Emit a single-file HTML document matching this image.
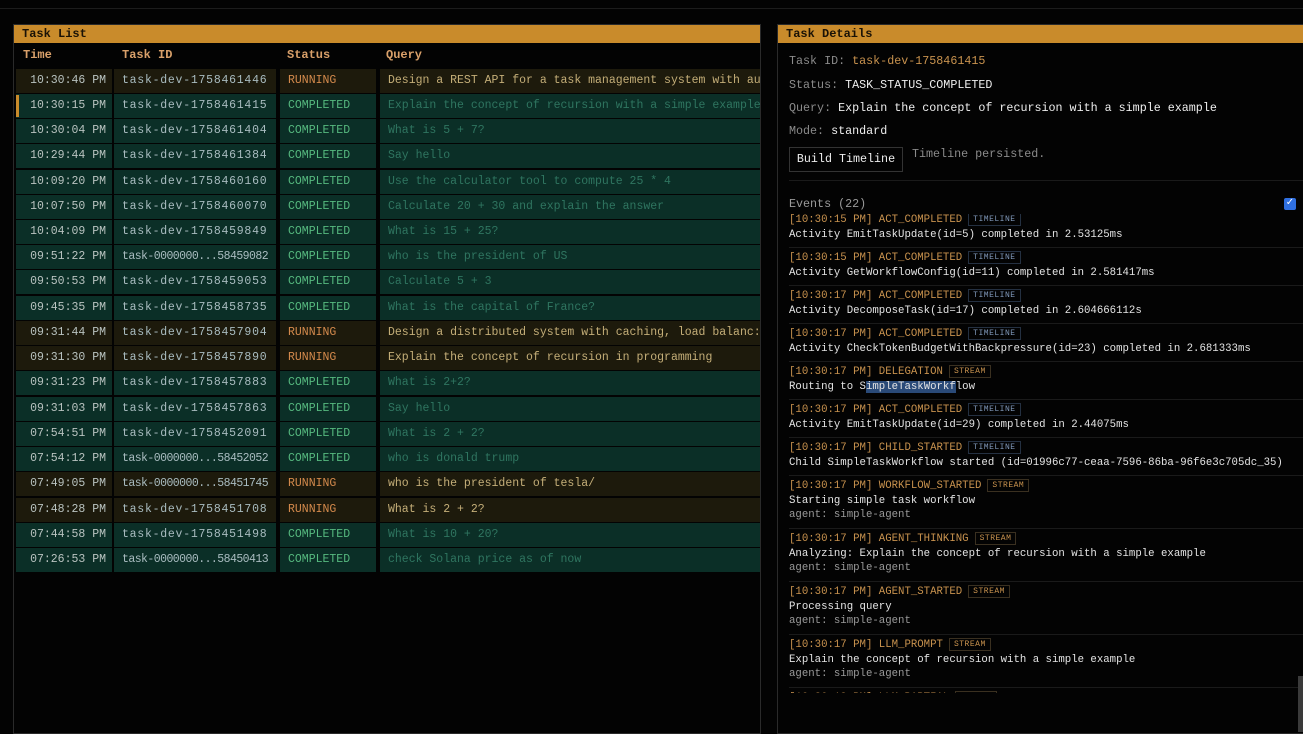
<!DOCTYPE html>
<html><head><meta charset="utf-8"><style>
*{margin:0;padding:0;box-sizing:border-box}
body{width:1303px;height:732px;background:#030303;overflow:hidden;position:relative;font-family:"Liberation Mono",monospace;}
.topline{position:absolute;left:0;top:8px;width:1303px;height:1px;background:#1c1c1c}
.panel{position:absolute;top:24px;bottom:-2px;border:1px solid #2a2a2a;background:#030303}
.hdr{height:18px;background:#c98b2b;color:#1a1206;font-weight:bold;font-size:12px;line-height:18px;padding-left:8px}
.th{position:absolute;top:48px;font-size:12px;color:#d9a06a;font-weight:bold}
.row{position:absolute;left:3px;width:744px;height:24px}
.c{position:absolute;top:0;height:24px;line-height:24px;font-size:11.5px;white-space:nowrap;overflow:hidden}
.r .c{background:#1d1a0c}
.g .c{background:#0b2f27}
.c1{left:0;width:96px;text-align:right;padding-right:6px;color:#b9c3c0}
.c2{left:98px;width:162px;padding-left:8px;color:#a9bcc0;letter-spacing:0.75px}
.c2.l{letter-spacing:-0.55px}
.c3{left:264px;width:96px;padding-left:8px}
.c4{left:364px;width:380px;padding-left:8px}
.r .c3{color:#d48a4c}.g .c3{color:#56b97f}
.r .c4{color:#c4ae78}.g .c4{color:#2f7560}
.sel{position:absolute;left:16px;top:95px;width:3px;height:22px;background:#c98b2b}
.d{position:absolute;left:789px;font-size:11.7px;white-space:nowrap}
.lab{color:#8b8b8b}
.ev{position:absolute;left:789px;font-size:10.7px;line-height:14.5px;white-space:nowrap;color:#e4e4e4}
.ev .h{color:#c8924e}
.tag{display:inline-block;font-size:8px;letter-spacing:0.5px;border:1px solid #3a3020;padding:0 4px;line-height:11px;margin-left:6px;vertical-align:1px}
.tag.t{color:#7f97b8;border-color:#243041}
.tag.s{color:#c8924e}
.ev .a{color:#9a9a9a}
.sep{position:absolute;left:789px;width:514px;height:1px;background:#1a1a1a}
</style></head><body>
<div class="topline"></div>
<div class="panel" style="left:13px;width:748px"><div class="hdr">Task List</div></div>
<div class="th" style="left:23px">Time</div>
<div class="th" style="left:122px">Task ID</div>
<div class="th" style="left:287px">Status</div>
<div class="th" style="left:386px">Query</div>
<div style="position:absolute;left:13px;top:69px;width:748px;height:505px;overflow:hidden">
<div class="row r" style="top:0"><div class="c c1">10:30:46 PM</div><div class="c c2">task-dev-1758461446</div><div class="c c3">RUNNING</div><div class="c c4">Design a REST API for a task management system with au</div></div>
<div class="row g" style="top:25px"><div class="c c1">10:30:15 PM</div><div class="c c2">task-dev-1758461415</div><div class="c c3">COMPLETED</div><div class="c c4">Explain the concept of recursion with a simple example</div></div>
<div class="row g" style="top:50px"><div class="c c1">10:30:04 PM</div><div class="c c2">task-dev-1758461404</div><div class="c c3">COMPLETED</div><div class="c c4">What is 5 + 7?</div></div>
<div class="row g" style="top:75px"><div class="c c1">10:29:44 PM</div><div class="c c2">task-dev-1758461384</div><div class="c c3">COMPLETED</div><div class="c c4">Say hello</div></div>
<div class="row g" style="top:101px"><div class="c c1">10:09:20 PM</div><div class="c c2">task-dev-1758460160</div><div class="c c3">COMPLETED</div><div class="c c4">Use the calculator tool to compute 25 * 4</div></div>
<div class="row g" style="top:126px"><div class="c c1">10:07:50 PM</div><div class="c c2">task-dev-1758460070</div><div class="c c3">COMPLETED</div><div class="c c4">Calculate 20 + 30 and explain the answer</div></div>
<div class="row g" style="top:151px"><div class="c c1">10:04:09 PM</div><div class="c c2">task-dev-1758459849</div><div class="c c3">COMPLETED</div><div class="c c4">What is 15 + 25?</div></div>
<div class="row g" style="top:176px"><div class="c c1">09:51:22 PM</div><div class="c c2 l">task-0000000...58459082</div><div class="c c3">COMPLETED</div><div class="c c4">who is the president of US</div></div>
<div class="row g" style="top:201px"><div class="c c1">09:50:53 PM</div><div class="c c2">task-dev-1758459053</div><div class="c c3">COMPLETED</div><div class="c c4">Calculate 5 + 3</div></div>
<div class="row g" style="top:227px"><div class="c c1">09:45:35 PM</div><div class="c c2">task-dev-1758458735</div><div class="c c3">COMPLETED</div><div class="c c4">What is the capital of France?</div></div>
<div class="row r" style="top:252px"><div class="c c1">09:31:44 PM</div><div class="c c2">task-dev-1758457904</div><div class="c c3">RUNNING</div><div class="c c4">Design a distributed system with caching, load balanc:</div></div>
<div class="row r" style="top:277px"><div class="c c1">09:31:30 PM</div><div class="c c2">task-dev-1758457890</div><div class="c c3">RUNNING</div><div class="c c4">Explain the concept of recursion in programming</div></div>
<div class="row g" style="top:302px"><div class="c c1">09:31:23 PM</div><div class="c c2">task-dev-1758457883</div><div class="c c3">COMPLETED</div><div class="c c4">What is 2+2?</div></div>
<div class="row g" style="top:328px"><div class="c c1">09:31:03 PM</div><div class="c c2">task-dev-1758457863</div><div class="c c3">COMPLETED</div><div class="c c4">Say hello</div></div>
<div class="row g" style="top:353px"><div class="c c1">07:54:51 PM</div><div class="c c2">task-dev-1758452091</div><div class="c c3">COMPLETED</div><div class="c c4">What is 2 + 2?</div></div>
<div class="row g" style="top:378px"><div class="c c1">07:54:12 PM</div><div class="c c2 l">task-0000000...58452052</div><div class="c c3">COMPLETED</div><div class="c c4">who is donald trump</div></div>
<div class="row r" style="top:403px"><div class="c c1">07:49:05 PM</div><div class="c c2 l">task-0000000...58451745</div><div class="c c3">RUNNING</div><div class="c c4">who is the president of tesla/</div></div>
<div class="row r" style="top:429px"><div class="c c1">07:48:28 PM</div><div class="c c2">task-dev-1758451708</div><div class="c c3">RUNNING</div><div class="c c4">What is 2 + 2?</div></div>
<div class="row g" style="top:454px"><div class="c c1">07:44:58 PM</div><div class="c c2">task-dev-1758451498</div><div class="c c3">COMPLETED</div><div class="c c4">What is 10 + 20?</div></div>
<div class="row g" style="top:479px"><div class="c c1">07:26:53 PM</div><div class="c c2 l">task-0000000...58450413</div><div class="c c3">COMPLETED</div><div class="c c4">check Solana price as of now</div></div>
</div>
<div class="sel"></div>

<div class="panel" style="left:777px;width:530px"><div class="hdr">Task Details</div></div>
<div class="d" style="top:54px"><span class="lab">Task ID: </span><span style="color:#c8924e">task-dev-1758461415</span></div>
<div class="d" style="top:78px"><span class="lab">Status: </span><span style="color:#eee">TASK_STATUS_COMPLETED</span></div>
<div class="d" style="top:101px"><span class="lab">Query: </span><span style="color:#eee">Explain the concept of recursion with a simple example</span></div>
<div class="d" style="top:124px"><span class="lab">Mode: </span><span style="color:#eee">standard</span></div>
<div style="position:absolute;left:789px;top:147px;width:114px;height:25px;border:1px solid #333;color:#eee;font-size:11.7px;line-height:23px;text-align:center">Build Timeline</div>
<div class="d" style="top:147px;left:912px;color:#8b8b8b">Timeline persisted.</div>
<div class="sep" style="top:180px"></div>
<div class="d" style="top:197px;color:#9a9a9a">Events (22)</div>
<div style="position:absolute;left:1284px;top:198px;width:12px;height:12px;background:#2f6fe0;border-radius:2px;color:#fff;font-size:10px;line-height:12px;text-align:center">✓</div>
<div style="position:absolute;left:777px;top:214px;width:526px;height:479px;overflow:hidden">
<div style="position:absolute;left:-777px;top:-214px;width:1303px;height:732px">
<div class="ev" style="top:213px"><span class="h">[10:30:15 PM] ACT_COMPLETED</span><span class="tag t">TIMELINE</span><br>Activity EmitTaskUpdate(id=5) completed in 2.53125ms</div>
<div class="sep" style="top:247px"></div>
<div class="ev" style="top:251px"><span class="h">[10:30:15 PM] ACT_COMPLETED</span><span class="tag t">TIMELINE</span><br>Activity GetWorkflowConfig(id=11) completed in 2.581417ms</div>
<div class="sep" style="top:285px"></div>
<div class="ev" style="top:289px"><span class="h">[10:30:17 PM] ACT_COMPLETED</span><span class="tag t">TIMELINE</span><br>Activity DecomposeTask(id=17) completed in 2.604666112s</div>
<div class="sep" style="top:323px"></div>
<div class="ev" style="top:327px"><span class="h">[10:30:17 PM] ACT_COMPLETED</span><span class="tag t">TIMELINE</span><br>Activity CheckTokenBudgetWithBackpressure(id=23) completed in 2.681333ms</div>
<div class="sep" style="top:361px"></div>
<div class="ev" style="top:365px"><span class="h">[10:30:17 PM] DELEGATION</span><span class="tag s">STREAM</span><br>Routing to S<span style="background:#2a4a78">impleTaskWorkf</span>low</div>
<div class="sep" style="top:399px"></div>
<div class="ev" style="top:403px"><span class="h">[10:30:17 PM] ACT_COMPLETED</span><span class="tag t">TIMELINE</span><br>Activity EmitTaskUpdate(id=29) completed in 2.44075ms</div>
<div class="sep" style="top:437px"></div>
<div class="ev" style="top:441px"><span class="h">[10:30:17 PM] CHILD_STARTED</span><span class="tag t">TIMELINE</span><br>Child SimpleTaskWorkflow started (id=01996c77-ceaa-7596-86ba-96f6e3c705dc_35)</div>
<div class="sep" style="top:475px"></div>
<div class="ev" style="top:479px"><span class="h">[10:30:17 PM] WORKFLOW_STARTED</span><span class="tag s">STREAM</span><br>Starting simple task workflow<br><span class="a">agent: simple-agent</span></div>
<div class="sep" style="top:528px"></div>
<div class="ev" style="top:532px"><span class="h">[10:30:17 PM] AGENT_THINKING</span><span class="tag s">STREAM</span><br>Analyzing: Explain the concept of recursion with a simple example<br><span class="a">agent: simple-agent</span></div>
<div class="sep" style="top:581px"></div>
<div class="ev" style="top:585px"><span class="h">[10:30:17 PM] AGENT_STARTED</span><span class="tag s">STREAM</span><br>Processing query<br><span class="a">agent: simple-agent</span></div>
<div class="sep" style="top:634px"></div>
<div class="ev" style="top:638px"><span class="h">[10:30:17 PM] LLM_PROMPT</span><span class="tag s">STREAM</span><br>Explain the concept of recursion with a simple example<br><span class="a">agent: simple-agent</span></div>
<div class="sep" style="top:687px"></div>
<div class="ev" style="top:691px"><span class="h">[10:30:18 PM] LLM_PARTIAL</span><span class="tag s">STREAM</span></div>
</div></div>
<div style="position:absolute;left:1298px;top:676px;width:5px;height:56px;background:#3a3a3a"></div>
</body></html>
